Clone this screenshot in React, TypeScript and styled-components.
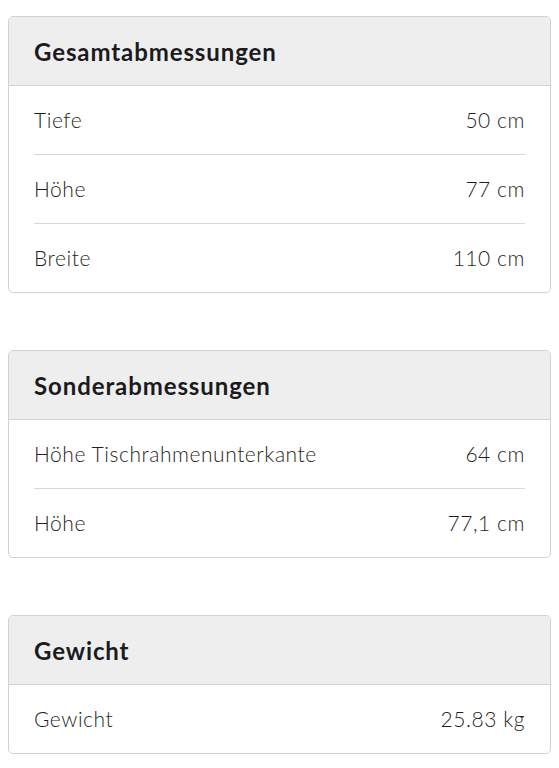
import React from 'react';
import styled, { createGlobalStyle } from 'styled-components';

const GlobalStyle = createGlobalStyle`
    body {
        margin: 0;
        background: #ffffff;
        font-family: Lato, "Open Sans", Arial, sans-serif;
    }
`;

const Page = styled.div`
    display: flex;
    flex-direction: column;
    gap: 57px;
    padding: 16px 8px;
`;

const Card = styled.section`
    border: 1px solid #d2d2d4;
    border-radius: 5px;
    overflow: hidden;
    background: #ffffff;
`;

const Header = styled.div`
    height: 68px;
    display: flex;
    align-items: center;
    padding: 0 25px;
    background: #eeeeef;
    border-bottom: 1px solid #d2d2d4;
`;

const Title = styled.h2`
    margin: 0;
    font-size: 24px;
    font-weight: 700;
    letter-spacing: 0.9px;
    color: #1b1b1d;
`;

const Rows = styled.div`
    padding: 0 25px;
`;

const Row = styled.div`
    height: 66px;
    padding-bottom: 2px;
    display: flex;
    align-items: center;
    justify-content: space-between;
    font-size: 21px;
    font-weight: 300;
    letter-spacing: 0.55px;
    color: #1f1f21;

    & + & {
        border-top: 1px solid #d6d6d8;
    }
`;

type Section = {
    title: string;
    rows: [string, string][];
};

const sections: Section[] = [
    {
        title: 'Gesamtabmessungen',
        rows: [
            ['Tiefe', '50 cm'],
            ['Höhe', '77 cm'],
            ['Breite', '110 cm'],
        ],
    },
    {
        title: 'Sonderabmessungen',
        rows: [
            ['Höhe Tischrahmenunterkante', '64 cm'],
            ['Höhe', '77,1 cm'],
        ],
    },
    {
        title: 'Gewicht',
        rows: [['Gewicht', '25.83 kg']],
    },
];

const App: React.FC = () => {
    return (
        <>
            <GlobalStyle />
            <Page>
                {sections.map((section) => (
                    <Card key={section.title}>
                        <Header>
                            <Title>{section.title}</Title>
                        </Header>
                        <Rows>
                            {section.rows.map(([label, value]) => (
                                <Row key={label + value}>
                                    <span>{label}</span>
                                    <span>{value}</span>
                                </Row>
                            ))}
                        </Rows>
                    </Card>
                ))}
            </Page>
        </>
    );
};

export default App;
